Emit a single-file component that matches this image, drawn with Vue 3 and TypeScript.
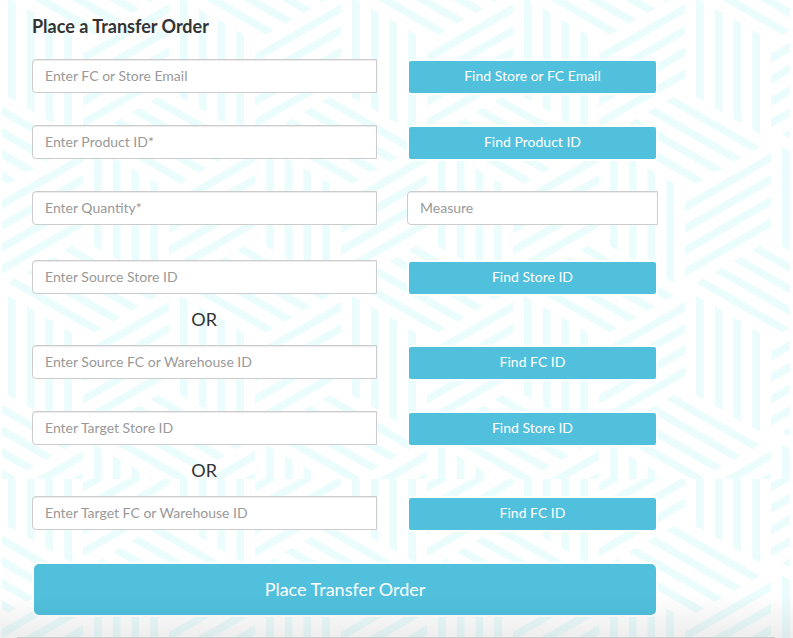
<script setup lang="ts">
import { reactive } from 'vue'

interface Row {
  key: string
  placeholder: string
  action?: string
  orBefore?: boolean
}

const rows: Row[] = [
  { key: 'email', placeholder: 'Enter FC or Store Email', action: 'Find Store or FC Email' },
  { key: 'product', placeholder: 'Enter Product ID*', action: 'Find Product ID' },
  { key: 'quantity', placeholder: 'Enter Quantity*' },
  { key: 'sourceStore', placeholder: 'Enter Source Store ID', action: 'Find Store ID' },
  { key: 'sourceFc', placeholder: 'Enter Source FC or Warehouse ID', action: 'Find FC ID', orBefore: true },
  { key: 'targetStore', placeholder: 'Enter Target Store ID', action: 'Find Store ID' },
  { key: 'targetFc', placeholder: 'Enter Target FC or Warehouse ID', action: 'Find FC ID', orBefore: true },
]

const order = reactive<Record<string, string>>({ measure: '' })
rows.forEach((row) => (order[row.key] = ''))

// Striped faces of one cube, drawn around its centre point
const faces = [
  'matrix(86 49.67 0 99.33 -86 -49.67)',
  'matrix(0 99.33 86 -49.67 0 0)',
  'matrix(86 -49.67 86 49.67 -86 -49.67)',
]
const stripes = [0.128, 0.346, 0.564, 0.782]
const centres = [
  [86, 0],
  [0, 149],
  [172, 149],
  [86, 298],
]
</script>

<template>
  <main class="page">
    <svg class="weave" aria-hidden="true">
      <defs>
        <g id="cube">
          <g v-for="face in faces" :key="face" :transform="face">
            <rect v-for="s in stripes" :key="s" :x="s" y="0" width="0.09" height="1" />
          </g>
        </g>
        <pattern id="upper" x="-5" y="41" width="172" height="298" patternUnits="userSpaceOnUse">
          <use v-for="c in centres" :key="c.join()" href="#cube" :x="c[0]" :y="c[1]" />
        </pattern>
        <pattern id="lower" x="-5" y="470" width="172" height="298" patternUnits="userSpaceOnUse">
          <use v-for="c in centres" :key="c.join()" href="#cube" :x="c[0]" :y="c[1]" />
        </pattern>
      </defs>
      <rect width="100%" height="479" fill="url(#upper)" />
      <rect y="479" width="100%" height="100%" fill="url(#lower)" />
    </svg>

    <form class="form" @submit.prevent>
      <h1 class="title">Place a Transfer Order</h1>
      <template v-for="row in rows" :key="row.key">
        <p v-if="row.orBefore" class="or">OR</p>
        <div class="row" :class="{ last: row.key === 'quantity', tight: row.key.endsWith('Store') }">
          <input v-model="order[row.key]" class="field" type="text" :placeholder="row.placeholder" :aria-label="row.placeholder" />
          <button v-if="row.action" class="find" type="button">{{ row.action }}</button>
          <input v-else v-model="order.measure" class="field" type="text" placeholder="Measure" aria-label="Measure" />
        </div>
      </template>
      <button class="submit" type="submit">Place Transfer Order</button>
    </form>

    <div class="shade"></div>
  </main>
</template>

<style>
body {
  margin: 0;
  background: #fff;
}
</style>

<style scoped>
.page {
  position: relative;
  box-sizing: border-box;
  min-height: 100vh;
  padding: 12px 32px 20px;
  overflow: hidden;
  color: #333;
  font-family: Lato, "Liberation Sans", sans-serif;
}
.weave {
  position: absolute;
  inset: 0 3px 0 2px;
  width: calc(100% - 5px);
  height: 100%;
  fill: #ebfcfd;
}
.form {
  position: relative;
  max-width: 626px;
}
.title {
  margin: 0 0 19px;
  font-size: 18px;
  font-weight: 700;
  line-height: 28px;
}
.row {
  display: grid;
  grid-template-columns: 345fr 251fr;
  column-gap: 30px;
  align-items: start;
  min-height: 36px;
  margin-bottom: 30px;
}
.row.last {
  margin-bottom: 33px;
}
.row.tight {
  margin-bottom: 0;
}
.field {
  box-sizing: border-box;
  width: 100%;
  min-width: 0;
  height: 34px;
  padding: 5px 12px 7px;
  border: 1px solid #ccc;
  border-radius: 4px 0 0 4px;
  background: #fff;
  box-shadow: inset 0 1px 1px rgba(0, 0, 0, 0.08);
  color: #555;
  font: 14px/20px Lato, "Liberation Sans", sans-serif;
}
.field::placeholder {
  color: #999;
  opacity: 1;
}
.find,
.submit {
  border: 2px solid #fff;
  background: #51c0dc;
  color: #fff;
  font-family: inherit;
  cursor: pointer;
}
.find {
  height: 36px;
  padding: 0 12px 2px;
  border-radius: 4px;
  font-size: 14px;
  line-height: 20px;
}
.or {
  width: 55%;
  margin: 0;
  padding: 9px 0 12px;
  font-size: 18px;
  line-height: 28px;
  text-align: center;
}
.submit {
  display: block;
  width: 100%;
  height: 55px;
  padding: 0 12px 2px;
  border-radius: 7px;
  font-size: 18px;
}
.shade {
  position: absolute;
  inset: auto 0 0;
  height: 44px;
  background: linear-gradient(rgba(0, 0, 0, 0), rgba(0, 0, 0, 0.07));
  pointer-events: none;
}
.shade::after {
  content: "";
  position: absolute;
  inset: auto 18px 0 17px;
  height: 1px;
  background: #ccc;
}
</style>
